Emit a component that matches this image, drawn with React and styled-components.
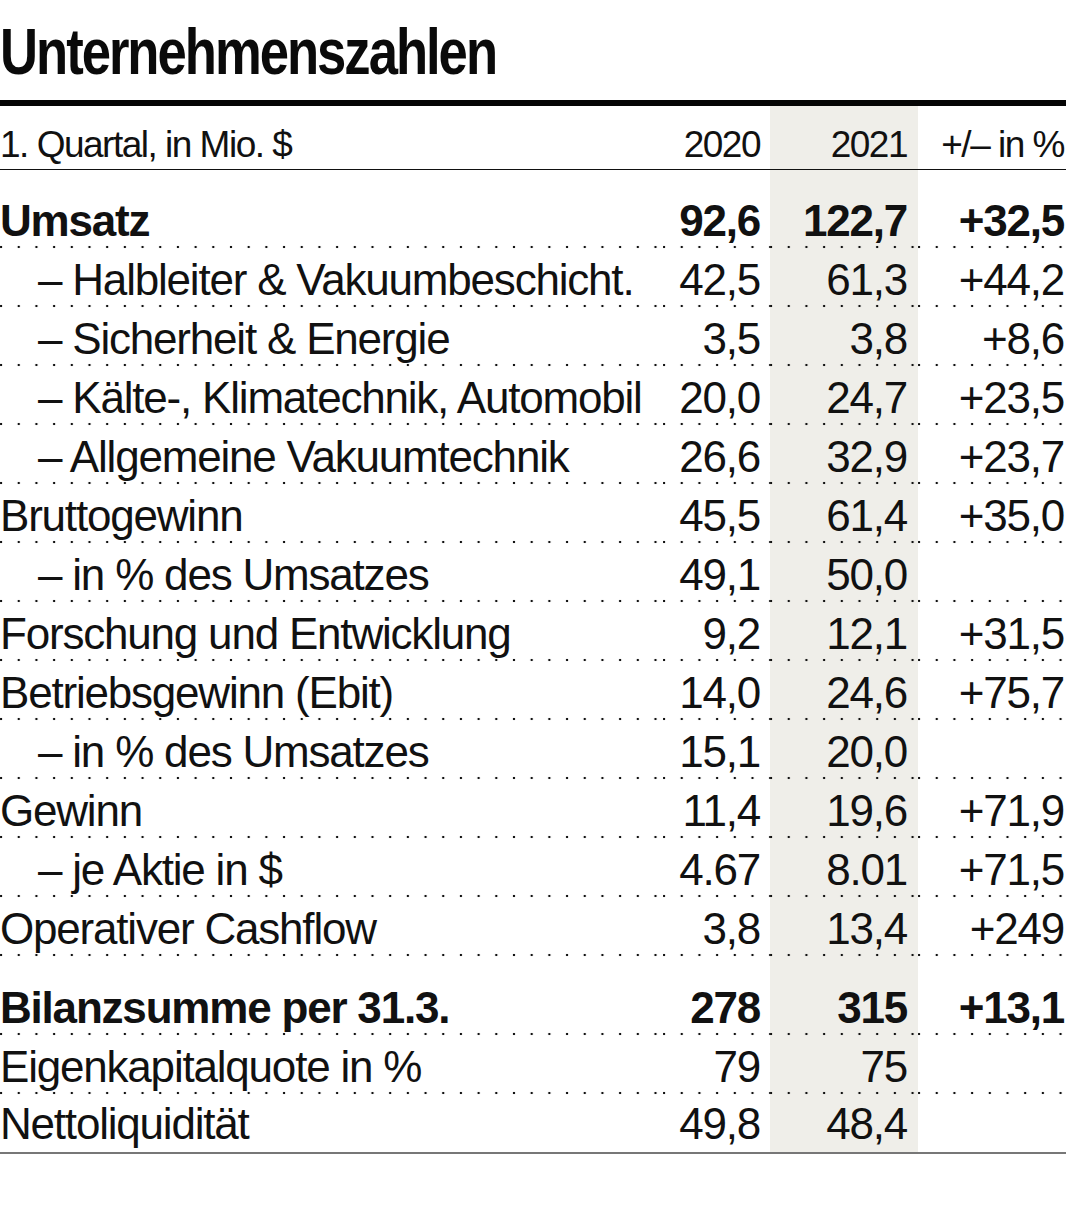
import React from 'react';
import styled, { createGlobalStyle } from 'styled-components';

const GlobalStyle = createGlobalStyle`
  html, body {
    margin: 0;
    padding: 0;
    background: #fff;
  }
  body {
    font-family: 'Liberation Sans', Arial, sans-serif;
    color: #111;
  }
`;

const rows = [
  { label: 'Umsatz', a: '92,6', b: '122,7', c: '+32,5', bold: true, gap: true },
  { label: '– Halbleiter & Vakuumbeschicht.', a: '42,5', b: '61,3', c: '+44,2', indent: true },
  { label: '– Sicherheit & Energie', a: '3,5', b: '3,8', c: '+8,6', indent: true },
  { label: '– Kälte-, Klimatechnik, Automobil', a: '20,0', b: '24,7', c: '+23,5', indent: true },
  { label: '– Allgemeine Vakuumtechnik', a: '26,6', b: '32,9', c: '+23,7', indent: true },
  { label: 'Bruttogewinn', a: '45,5', b: '61,4', c: '+35,0' },
  { label: '– in % des Umsatzes', a: '49,1', b: '50,0', c: '', indent: true },
  { label: 'Forschung und Entwicklung', a: '9,2', b: '12,1', c: '+31,5' },
  { label: 'Betriebsgewinn (Ebit)', a: '14,0', b: '24,6', c: '+75,7' },
  { label: '– in % des Umsatzes', a: '15,1', b: '20,0', c: '', indent: true },
  { label: 'Gewinn', a: '11,4', b: '19,6', c: '+71,9' },
  { label: '– je Aktie in $', a: '4.67', b: '8.01', c: '+71,5', indent: true },
  { label: 'Operativer Cashflow', a: '3,8', b: '13,4', c: '+249' },
  { label: 'Bilanzsumme per 31.3.', a: '278', b: '315', c: '+13,1', bold: true, gap: true },
  { label: 'Eigenkapitalquote in %', a: '79', b: '75', c: '' },
  { label: 'Nettoliquidität', a: '49,8', b: '48,4', c: '', last: true },
];

const Page = styled.div`
  width: 1066px;
`;

const Title = styled.h1`
  margin: 0;
  padding-top: 12px;
  height: 80px;
  line-height: 80px;
  font-family: 'Liberation Sans', Arial, sans-serif;
  font-size: 65px;
  font-weight: 700;
  letter-spacing: -2.5px;
  color: #0a0a0a;
  white-space: nowrap;
`;

// the paper uses a condensed bold face, squeeze the heading to match
const TitleText = styled.span`
  display: inline-block;
  transform: scaleX(0.81);
  transform-origin: left center;
`;

const Rule = styled.div`
  margin-top: 8px;
  height: 6px;
  background: #050505;
`;

const Grid = styled.div`
  display: grid;
  grid-template-columns: 663px 107px 148px 148px;
`;

const HeadCell = styled.div`
  display: flex;
  align-items: flex-end;
  justify-content: ${(p) => (p.$num ? 'flex-end' : 'flex-start')};
  height: 64px;
  padding: 0 ${(p) => p.$pr || 0}px 6px 0;
  box-sizing: border-box;
  font-size: 37px;
  line-height: 1;
  letter-spacing: -1.5px;
  white-space: nowrap;
  border-bottom: 1px solid #111;
  background: ${(p) => (p.$shade ? '#efeee9' : 'transparent')};
`;

const Cell = styled.div`
  display: flex;
  align-items: flex-end;
  justify-content: ${(p) => (p.$num ? 'flex-end' : 'flex-start')};
  height: ${(p) => (p.$gap ? 79 : 59)}px;
  padding: 0 ${(p) => p.$pr || 0}px 6px ${(p) => (p.$indent ? 38 : 0)}px;
  box-sizing: border-box;
  font-size: 44px;
  line-height: 1;
  letter-spacing: -1.2px;
  font-weight: ${(p) => (p.$bold ? 700 : 400)};
  white-space: nowrap;
  background-color: ${(p) => (p.$shade ? '#efeee9' : 'transparent')};
  background-image: ${(p) => (p.$last
    ? 'none'
    : 'radial-gradient(circle, #111 1px, transparent 1.6px)')};
  background-size: 17.7px 4px;
  background-repeat: repeat-x;
  background-position: -7.8px 100%;
  border-bottom: ${(p) => (p.$last ? '2px solid #777' : 'none')};
`;

function App() {
  return (
    <Page>
      <GlobalStyle />
      <Title>
        <TitleText>Unternehmenszahlen</TitleText>
      </Title>
      <Rule />
      <Grid>
        <HeadCell>1. Quartal, in Mio. $</HeadCell>
        <HeadCell $num $pr={10}>2020</HeadCell>
        <HeadCell $num $pr={11} $shade>2021</HeadCell>
        <HeadCell $num $pr={2}>+/– in %</HeadCell>
        {rows.map((r) => (
          <React.Fragment key={r.label + r.a}>
            <Cell $bold={r.bold} $gap={r.gap} $indent={r.indent} $last={r.last}>
              {r.label}
            </Cell>
            <Cell $num $pr={10} $bold={r.bold} $gap={r.gap} $last={r.last}>
              {r.a}
            </Cell>
            <Cell $num $pr={11} $shade $bold={r.bold} $gap={r.gap} $last={r.last}>
              {r.b}
            </Cell>
            <Cell $num $pr={2} $bold={r.bold} $gap={r.gap} $last={r.last}>
              {r.c}
            </Cell>
          </React.Fragment>
        ))}
      </Grid>
    </Page>
  );
}

export default App;
